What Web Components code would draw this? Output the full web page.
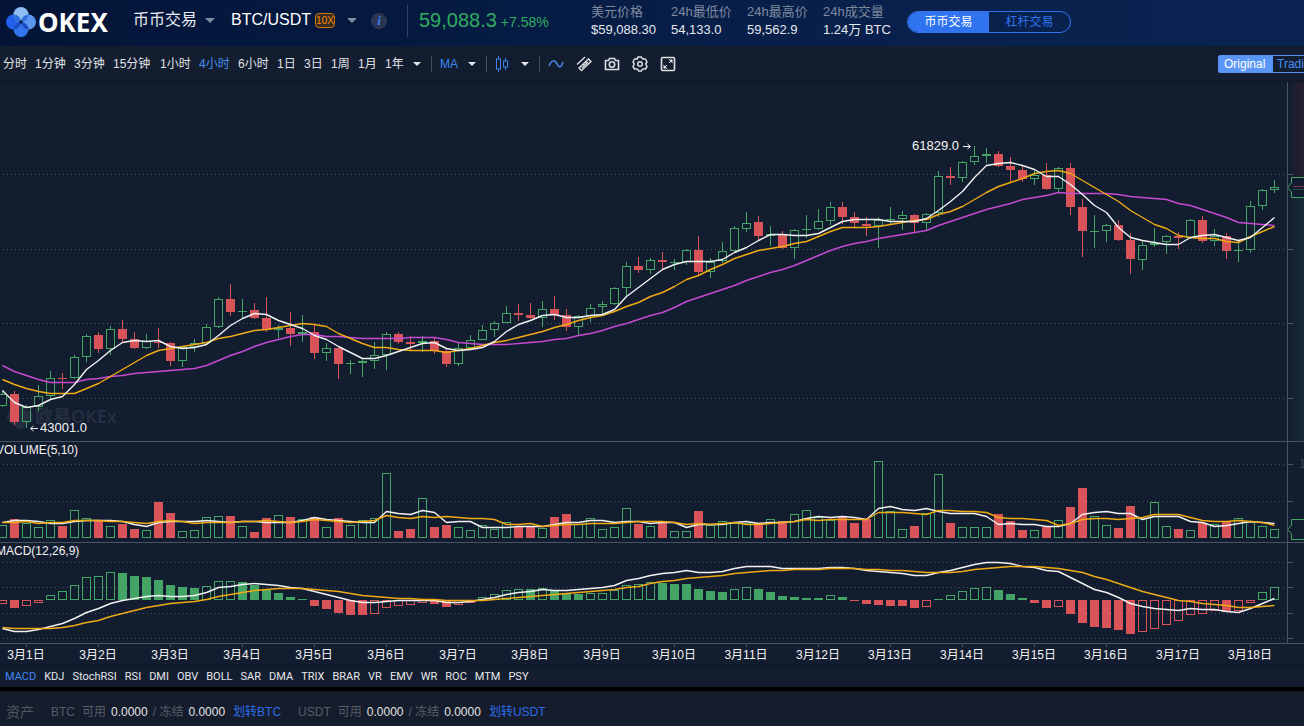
<!DOCTYPE html>
<html lang="zh-CN">
<head>
<meta charset="utf-8">
<title>BTC/USDT - OKEx</title>
<style>
  html, body { margin: 0; min-height: 100%; background: #151d2c; }
  body { font: 12px/16px "Liberation Sans", "Noto Sans CJK SC", sans-serif; color: #d8dbe0; overflow-x: hidden; }
</style>
</head>
<body>
<trade-page></trade-page>
<script>
const define = (name, html, setup) => {
  const tpl = document.createElement('template');
  tpl.innerHTML = html;
  customElements.define(name, class extends HTMLElement {
    constructor() {
      super();
      this.attachShadow({ mode: 'open' }).appendChild(tpl.content.cloneNode(true));
    }
    connectedCallback() { if (setup) setup(this, this.shadowRoot); }
  });
};
const resetButton = 'button{font:inherit;color:inherit;background:none;border:0;padding:0;margin:0;cursor:pointer;white-space:nowrap;text-align:left}';

/* ---------- chart data, one entry for each four-hour bar ---------- */
// direction, then the y of high, body top, body bottom, low
const CANDLES = `g390,394,406,407 r391,394,422,425 g405,407,422,428 g385,396,407,411 g371,378,396,399 r373,378,379,389
g355,357,378,379 g334,336,357,362 r332,335,349,353 g326,329,349,355 r320,329,339,343 r332,339,348,349
g334,341,348,349 r328,342,343,348 r342,343,361,366 g346,347,361,367 g339,343,347,352 g324,327,343,344
g297,299,327,328 r284,299,312,316 g299,311,312,318 r303,310,318,319 r297,318,330,332 g325,328,330,338
r312,328,334,346 g315,332,334,342 r324,332,353,359 g343,348,353,361 r348,348,364,379 g360,363,364,374
g359,361,363,377 g342,355,361,369 g332,334,355,370 r332,334,342,344 r336,342,344,351 g336,341,343,352
r338,341,351,354 r349,351,364,367 g343,348,364,366 g335,340,348,349 g325,330,340,340 g321,323,330,337
g306,313,323,323 r304,313,315,321 r303,315,318,319 g301,309,318,327 r296,309,315,320 r309,315,327,331
g315,316,327,335 g304,308,316,322 g301,304,307,315 g287,288,304,305 g262,266,288,297 r257,266,270,273
g258,260,270,274 r252,260,262,270 g259,262,263,270 g249,250,262,265 r236,250,272,276 g258,262,272,278
g242,251,261,263 g226,228,251,252 g212,223,229,232 r216,222,236,240 g226,234,236,246 r231,235,248,249
g229,230,248,259 g215,229,230,238 g209,221,229,230 g202,207,221,225 r202,207,217,224 r212,217,223,227
r217,224,226,236 g217,220,226,248 g207,219,220,224 g211,215,219,230 r214,215,223,232 g213,214,223,230
g171,176,213,217 r167,176,178,185 g161,162,178,182 g146,156,162,165 g148,154,156,163 r151,154,166,167
r157,166,170,183 r166,170,179,182 g170,175,179,185 r163,175,189,190 g167,168,189,192 r163,168,207,215
r199,207,231,257 g215,231,232,248 g224,225,231,242 r220,225,240,241 r233,240,259,274 g241,245,260,270
g228,243,245,247 g235,236,242,254 r232,236,238,249 g219,220,238,239 r216,220,241,243 g229,236,241,246
r233,236,251,259 g240,250,251,262 g201,206,250,253 g189,190,206,210 g180,187,190,193`.split(/\s+/)
  .map(s => ({ up: s[0] === 'g', v: s.slice(1).split(',').map(Number) }));
const nums = s => s.trim().split(/\s+/).map(Number);
const MA5 = nums(`390 402 407 405 399 396 384 369 360 350 342 340 341 340 346 348 347 344 335 325 318 313 314 320 324 328 335 339 346 352 358 358 355 351 347 343 342 348 350 349 347 341 331 324 320 315 314 317 317 315 314 309 296 287 278 269 264 261 261 261 259 252 247 240 234 234 235 235 233 227 221 219 219 219 221 221 221 218 210 201 191 177 165 163 162 165 169 176 176 184 194 205 212 227 237 240 242 244 244 237 235 234 237 240 237 227 217`);
const MA10 = nums(`379 384 388 391 393 393 393 388 383 376 369 362 355 350 348 346 344 342 338 336 333 330 329 327 325 323 324 326 333 338 343 347 347 349 350 350 350 352 350 348 345 342 340 337 334 331 327 324 320 317 315 311 306 302 296 292 286 279 275 269 264 258 254 250 248 246 243 241 236 231 227 227 227 226 224 222 220 219 214 211 206 199 192 186 182 178 173 171 170 173 180 187 194 201 210 217 224 228 235 237 238 238 241 242 236 231 226`);
const MA30 = nums(`365 371 375 379 382 382 382 379 378 376 375 373 372 371 370 369 368 365 360 355 351 346 342 339 336 334 334 336 336 337 338 338 338 338 337 337 337 339 342 343 344 344 344 343 342 341 339 338 335 333 330 326 323 319 315 312 307 301 297 293 289 285 280 276 272 269 265 260 255 250 246 243 241 238 236 234 232 230 225 221 217 213 209 206 203 199 197 195 192 193 193 193 193 194 196 197 198 199 203 205 209 213 217 222 223 224 225`);
const VOL = nums(`525 519 523 527 520 526 510 518 520 526 524 529 530 502 513 531 530 517 516 516 526 532 518 515 517 519 517 527 518 525 520 518 473 531 529 498 527 525 527 530 525 529 522 527 527 528 517 514 524 518 529 527 508 524 526 522 531 531 511 525 521 523 523 523 519 521 514 510 517 520 517 523 519 461 511 529 526 513 474 523 527 527 527 514 521 530 530 527 520 507 488 516 525 528 506 518 502 526 529 530 523 524 522 518 522 526 529`);
const VMA5 = nums(`522 520 520 521 523 523 521 520 520 520 521 524 526 522 521 521 521 520 521 522 521 521 522 522 522 520 517 519 520 521 522 522 511 513 514 510 512 522 521 521 527 527 527 526 526 526 524 522 522 520 520 522 521 521 523 522 522 527 524 524 524 522 521 523 522 522 521 518 516 517 516 517 519 508 506 509 510 508 511 513 513 513 516 524 523 524 524 526 526 523 514 512 511 513 513 519 516 516 516 521 522 526 525 523 521 522 523`);
const VMA10 = nums(`522 522 521 523 522 522 520 520 520 521 521 522 523 521 520 521 523 522 522 522 521 521 520 521 522 521 519 520 521 522 521 520 515 517 518 516 517 516 517 518 518 519 524 524 523 526 525 524 524 523 523 523 522 521 521 521 522 524 523 524 523 522 524 524 523 522 521 519 520 519 519 519 519 512 512 512 513 514 510 510 511 511 512 517 518 518 519 520 525 523 519 518 518 519 518 517 514 514 514 517 520 521 521 520 521 522 525`);
// signed bar height; "h" marks a bar drawn hollow
const HIST = `-4h -8 -6h -3h 5h 9h 15h 23h 24h 28h 27 24 23 20 15 13 12 14h 19h 19h 18 15 10 7 3 1 -6 -9 -13 -15 -15 -14h -8h -6h -5h -3h -4 -7 -5h -3 3h 6h 10h 11h 11 12h 10 7 6 7h 7h 10h 15h 16h 18h 17 16 16 11 9 8 11h 13h 11 8 4 3 2 2 5h 3 -1 -4 -5 -6 -6 -8 -7h 1 5h 9h 12h 13h 10 6 2 -3 -8 -7h -14 -23 -27 -28 -30 -34 -32h -29h -25h -21h -15h -14h -11h -12 -11h -3h 8h 13h`
  .split(' ').map(s => ({ v: parseInt(s, 10), hollow: s.endsWith('h') }));
const DIF = nums(`628 631 631 629 626 623 618 612 608 603 600 598 596 595 596 596 595 592 587 586 584 583 584 585 587 588 591 594 597 600 602 602 601 600 600 600 600 602 602 601 599 597 594 592 591 589 590 590 589 588 587 585 580 578 575 573 572 570 572 572 571 568 566 566 566 568 568 568 568 567 567 568 570 571 572 573 575 575 572 570 567 564 562 562 563 566 567 570 571 577 583 589 592 597 603 606 608 609 610 608 609 609 611 612 608 603 598`);
const DEA = nums(`627 628 628 628 628 627 625 622 620 616 613 610 607 605 603 602 601 599 596 594 592 590 589 588 588 588 589 590 591 593 595 596 597 598 598 599 599 600 600 600 600 599 598 597 596 595 594 593 592 591 590 589 587 586 583 581 580 578 577 576 575 573 572 571 570 570 569 569 569 568 568 568 569 569 570 570 571 572 572 572 571 569 568 567 566 566 566 567 568 570 572 576 579 583 587 591 594 597 600 601 603 604 605 607 607 606 605`);

const RED = '#d85459', GREEN = '#43a466', STEP = 12, W = 1287;
const bar = (i, top, bottom, color, hollow) => {
  const x = i * STEP - 2, h = Math.max(1, bottom - top);
  return hollow && h > 2
    ? `<rect x="${x + .5}" y="${top + .5}" width="8" height="${h - 1}" fill="none" stroke="${color}"/>`
    : `<rect x="${x}" y="${top}" width="9" height="${h}" fill="${color}"/>`;
};
const line = (ys, color) => `<polyline fill="none" stroke="${color}" stroke-width="1.4" stroke-linejoin="round" points="${ys.map((y, i) => `${i * STEP + 2.5},${y + .5}`).join(' ')}"/>`;
const grid = ys => ys.map(y => `<path d="M3 ${y + .5}H${W - 2}" stroke="#48505f" stroke-dasharray="1 3"/>`).join('');
const WHITE = '#f2f2f2', YELLOW = '#f0ab14', PURPLE = '#c54ad2';
const label = (x, y, s, extra = '') => `<text x="${x}" y="${y}" fill="#f4f4f4" ${extra}>${s}</text>`;

const PANES = {
  price: {
    top: 82, height: 359, grid: [174, 249, 323, 398], tag: 187,
    draw: () => `<g fill="#252e41"><circle cx="14" cy="417" r="7"/><circle cx="26" cy="417" r="7"/><circle cx="20" cy="411" r="6"/><circle cx="20" cy="423" r="6"/>
      <text x="35" y="423" font-family="Noto Sans, Noto Sans CJK SC" font-size="18" font-weight="600">欧易OKEx</text></g>`
      + CANDLES.map((c, i) => {
        const [hi, t, b, lo] = c.v, col = c.up ? GREEN : RED, x = i * STEP + 2;
        return `<path d="M${x + .5} ${hi}V${t}M${x + .5} ${b}V${lo}" stroke="${col}"/>` + bar(i, t, b, col, c.up);
      }).join('') + line(MA30, PURPLE) + line(MA10, YELLOW) + line(MA5, WHITE)
      + label(959, 150, '61829.0', 'font-size="13" text-anchor="end"') + label(40, 432, '43001.0', 'font-size="13"')
      + '<path d="M963 146.500H970M967.500 144L970.500 146.500L967.500 149M38 428.500H31M33.500 426L30.500 428.500L33.500 431" fill="none" stroke="#f0f0f0"/>'
  },
  volume: {
    top: 442, height: 100, grid: [464, 501], tag: 529,
    draw: () => VOL.map((t, i) => bar(i, t, 538, CANDLES[i].up ? GREEN : RED, CANDLES[i].up)).join('')
      + line(VMA5, WHITE) + line(VMA10, YELLOW) + label(-4, 454, 'VOLUME(5,10)')
  },
  macd: {
    top: 543, height: 100, grid: [562, 587, 613, 638],
    draw: () => HIST.map((d, i) => d.v > 0 ? bar(i, 600 - d.v, 600, GREEN, d.hollow) : bar(i, 600, 600 - d.v, RED, d.hollow)).join('')
      + line(DIF, WHITE) + line(DEA, YELLOW) + label(-4, 555, 'MACD(12,26,9)')
  }
};

define('chart-pane', `<style>
  :host{display:flex;border-bottom:1px solid #4b5261;overflow:hidden}
  .plot{flex:1;min-width:0;display:flex;justify-content:flex-end;overflow:hidden}
  .scale{flex:none;border-left:1px solid #4b5261;display:flex}
  :host([kind=price]) .scale{background:linear-gradient(90deg,#131d30,transparent),linear-gradient(#271f30 29%,#172b35 29%)}
  svg{display:block;flex:none}
</style><div class="plot"></div><div class="scale"></div>`, (el, root) => {
  const kind = el.getAttribute('kind'), p = PANES[kind];
  root.querySelector('.plot').innerHTML =
    `<svg width="${W}" height="${p.height}" viewBox="0 ${p.top} ${W} ${p.height}" font-size="12">${grid(p.grid)}${p.draw()}</svg>`;
  const ticks = p.grid.map(y => `<path d="M0 ${y + .5}H5" stroke="#4b5261"/>`).join('');
  const tag = p.tag ? `<path d="M20 ${p.tag - 9.5}H3.500V${p.tag - 4}L-.5 ${p.tag + .5}L3.500 ${p.tag + 5}V${p.tag + 10.5}H20" fill="#131d30" stroke="${GREEN}"/>` : '';
  const mid = kind === 'price' ? '<path d="M5 186.500H16" stroke="#7c3340"/><path d="M5 189.500H16" stroke="#2c4a4b"/>' : '';
  const one = kind === 'volume' ? '<text x="11" y="468" fill="#3c4454">1</text>' : '';
  root.querySelector('.scale').innerHTML =
    `<svg width="16" height="${p.height}" viewBox="0 ${p.top} 16 ${p.height}" font-size="12">${ticks}${tag}${mid}${one}</svg>`;
});

define('time-axis', `<style>
  :host{display:flex;justify-content:flex-end;overflow:hidden;border-bottom:1px solid #0e1624}
  svg{display:block;flex:none}
</style><svg width="1304" height="21" font-size="12"></svg>`, (el, root) => {
  let s = '';
  for (let d = 0; d < 18; d++) {
    const x = 26 + d * 72;
    s += `<path d="M${x}.5 0V3" stroke="#4b5261"/>` + label(x, 15, `3月${d + 1}日`, 'text-anchor="middle"');
  }
  root.querySelector('svg').innerHTML = s;
});

define('down-caret', `<style>
  :host{display:block;flex:none;width:0;height:0;border:5px solid transparent;border-top-color:var(--caret,#7f8ba3);border-bottom:0}
  :host([small]){border-width:4px 4px 0}
</style>`);

define('okex-logo', `<style>
  :host{display:block;flex:none}
  a{display:flex;align-items:center;gap:2px;color:#fff;text-decoration:none;font:700 26px/30px "Noto Sans",sans-serif}
  svg{display:block}
</style><a href="#"><svg width="30" height="30" viewBox="0 0 30 30" aria-hidden="true">
  <circle cx="7.500" cy="15" r="7.500" fill="#2160ec"/><circle cx="15" cy="22.500" r="7.500" fill="#3175ee"/>
  <circle cx="22.500" cy="15" r="7.500" fill="#5b96ee"/><circle cx="15" cy="7.500" r="7.500" fill="#8dbdf2"/>
  <path d="M8 15A7.500 7.500 0 0 1 15 15A7.500 7.500 0 0 0 8 7.500A7.500 7.500 0 0 0 15 15" fill="#3f7fe6"/>
  <path d="M15 15A7.500 7.500 0 0 1 7.500 22.500A7.500 7.500 0 0 1 15 15M15 15A7.500 7.500 0 0 1 22.500 22.500A7.500 7.500 0 0 1 15 15" fill="#1a4dc4"/>
  <path d="M15 15A7.500 7.500 0 0 1 22.500 7.500A7.500 7.500 0 0 1 15 15M15 15A7.500 7.500 0 0 1 7.500 7.500A7.500 7.500 0 0 1 15 15" fill="#2f6ed8"/>
  <path d="M15 13L17 15L15 17L13 15Z" fill="#071a40"/>
</svg>OKEX</a>`);

define('market-stat', `<style>
  :host{display:block;font-size:13px;line-height:18px;white-space:nowrap;color:#e4e8ee}
  .name{color:#7f8a9f}
</style><div class="name"><slot name="name"></slot></div><div><slot></slot></div>`);

define('trade-header', `<style>${resetButton}
  :host{display:flex;align-items:center;height:46px;padding-left:6px;background:linear-gradient(90deg,#031437,#08204b 65%,#0a2350);white-space:nowrap;overflow:hidden;box-sizing:border-box}
  okex-logo{width:127px;margin-bottom:2px}
  .menu{display:flex;align-items:center;font-size:16px;line-height:20px;color:#e6ebf3;margin-bottom:6px}
  .kind{width:98px;gap:8px}
  .pair{width:140px;gap:4px;color:#fff}
  .pair down-caret{margin-left:8px}
  .lever{font-size:10px;line-height:13px;color:#f08a12;border:1px solid #c9780f;border-radius:4px;background:#3a2a1f;width:18px;text-align:center}
  .info{width:16px;height:16px;border-radius:8px;background:#2b3552;color:#3f7df0;font:italic 700 13px/16px "Liberation Serif",serif;text-align:center;margin-bottom:4px}
  .rule{width:1px;height:32px;background:#34425f;margin:0 11px 4px 20px}
  .last{width:172px;display:flex;align-items:baseline;gap:4px;color:#2eac5f;margin-bottom:6px}
  .last b{font-weight:400;font-size:20px;line-height:24px}
  .last span{font-size:14px}
  .stats{display:grid;grid-template-columns:80px 76px 76px 84px;margin-bottom:4px}
  .mode{display:flex;border:1px solid #2f74ee;border-radius:12px;overflow:hidden;height:20px;width:162px;margin-bottom:2px}
  .mode button{flex:1;text-align:center;color:#2f74ee}
  .mode .on{background:#2f74ee;color:#fff}
</style>
<okex-logo></okex-logo>
<button class="menu kind">币币交易<down-caret></down-caret></button>
<button class="menu pair">BTC/USDT<span class="lever">10X</span><down-caret></down-caret></button>
<button class="info" aria-label="info"><span>i</span></button>
<div class="rule"></div>
<div class="last"><b>59,088.3</b><span>+7.58%</span></div>
<div class="stats">
  <market-stat><span slot="name">美元价格</span>$59,088.30</market-stat>
  <market-stat><span slot="name">24h最低价</span>54,133.0</market-stat>
  <market-stat><span slot="name">24h最高价</span>59,562.9</market-stat>
  <market-stat><span slot="name">24h成交量</span>1.24万 BTC</market-stat>
</div>
<div class="mode"><button class="on">币币交易</button><button>杠杆交易</button></div>`);

define('chart-toolbar', `<style>${resetButton}
  :host{display:flex;align-items:center;height:36px;box-sizing:border-box;padding:1px 0 0 3px;border-bottom:1px solid #0e1624;overflow:hidden;white-space:nowrap;color:#e0e2e6;--caret:#e3e5e8}
  .s{width:27px}.m{width:39px}.l{width:47px}.first{width:32px}
  button{flex:none}
  .on{color:#4a8df0}
  .rule{flex:none;width:1px;height:16px;background:#474e5c;margin:0 8px 0 10px}
  .more{margin-left:1px}
  .drop{display:flex;align-items:center;gap:10px;color:#3f84f0}
  .type{gap:12px}
  .tools{display:flex;gap:12px;color:#dcdee2}
  svg{display:block}
  .view{flex:none;display:flex;margin-left:auto;width:86px}
  .view button{height:18px;line-height:16px;padding:0 4px;border:1px solid #5592f4;box-sizing:border-box;color:#4a8df0}
  .view .sel{background:#5a96f6;color:#fff;width:54px;padding:0 5px;border-radius:2px 0 0 2px}
</style>
<button class="first">分时</button><button class="m">1分钟</button><button class="m">3分钟</button><button class="l">15分钟</button><button class="m">1小时</button><button class="m on">4小时</button><button class="m">6小时</button><button class="s">1日</button><button class="s">3日</button><button class="s">1周</button><button class="s">1月</button><button class="s">1年</button>
<button class="more" aria-label="more"><down-caret small></down-caret></button>
<div class="rule"></div>
<button class="drop">MA<down-caret small></down-caret></button>
<div class="rule"></div>
<button class="drop type" aria-label="chart type"><svg width="14" height="16" fill="none" stroke="currentColor"><path d="M3.500 0V3M3.500 13V16M10.500 2V5M10.500 11V14"/><rect x="1.500" y="3" width="4" height="10"/><rect x="8.500" y="5" width="4" height="6"/></svg><down-caret small></down-caret></button>
<div class="rule"></div>
<div class="tools">
  <button class="on" aria-label="line"><svg width="16" height="16" fill="none" stroke="currentColor" stroke-width="1.500"><path d="M1 10C4 3 7 4 9 8S13 12 15 6"/></svg></button>
  <button aria-label="ruler"><svg width="16" height="16" fill="none" stroke="currentColor" stroke-width="1.400"><path d="M1 8.500L9 1M3 12L13 2.500M5.500 14.500L3 12L12.500 3L15 5.500Z"/><path d="M7 8L9 10M9.500 6L11 7.500M6 12L12 6"/></svg></button>
  <button aria-label="camera"><svg width="16" height="16" fill="none" stroke="currentColor" stroke-width="1.600"><path d="M1.500 4.500H4.500L5.500 2.500H10.500L11.500 4.500H14.500V13.500H1.500Z"/><circle cx="8" cy="8.500" r="2.700"/></svg></button>
  <button aria-label="settings"><svg width="16" height="16" fill="none" stroke="currentColor" stroke-width="1.500" stroke-linejoin="round"><path d="M5.500 1.500L6.500 1H9.500L10.500 3L13.500 3L15 6L13.700 8L15 10.500L13.500 13L10.500 13L9.500 15H6.500L5.500 13L2.500 13L1 10.500L2.300 8L1 6L2.500 3L5.500 3Z"/><circle cx="8" cy="8" r="2.300"/></svg></button>
  <button aria-label="full screen"><svg width="16" height="16" fill="none" stroke="currentColor"><rect x="1.500" y="1.500" width="13" height="13" rx="1" stroke-width="1.600"/><path d="M9 7L12 4M7 9L4 12"/><path d="M8.500 3.500H12.500V7.500ZM3.500 8.500V12.500H7.500Z" fill="currentColor" stroke="none"/></svg></button>
</div>
<div class="view"><button class="sel">Original</button><button>TradingView</button></div>`);

define('indicator-tabs', `<style>${resetButton}
  :host{display:flex;gap:8px;align-items:center;height:21px;padding-left:5px;border-bottom:4px solid #000;font:11px/16px Roboto,"Liberation Sans",sans-serif;color:#e4e6e9;overflow:hidden}
  .on{color:#4287ee}
</style>`, (el, root) => {
  'MACD KDJ StochRSI RSI DMI OBV BOLL SAR DMA TRIX BRAR VR EMV WR ROC MTM PSY'.split(' ').forEach((name, i) => {
    const b = document.createElement('button');
    b.textContent = name;
    if (!i) b.className = 'on';
    root.appendChild(b);
  });
});

define('asset-balance', `<style>
  :host{display:flex;gap:5px;white-space:nowrap;color:#565d69}
  .coin{margin-right:2px}
  b{font-weight:400;color:#e2e3e5}
  a{color:#2d6bea;text-decoration:none;margin-left:3px}
</style><span class="coin"></span><span>可用</span><b>0.0000</b><span>/ 冻结</span><b>0.0000</b><a href="#"></a>`, (el, root) => {
  const coin = el.getAttribute('coin');
  root.querySelector('.coin').textContent = coin;
  root.querySelector('a').textContent = '划转' + coin;
});

define('asset-bar', `<style>
  :host{display:flex;align-items:center;gap:17px;height:35px;padding:6px 0 0 6px;box-sizing:border-box;background:#151d2c;overflow:hidden}
  .title{font-size:14px;color:#4f5662}
</style><span class="title">资产</span><asset-balance coin="BTC"></asset-balance><asset-balance coin="USDT"></asset-balance>`);

define('trade-page', `<style>
  :host{display:block;background:#131d30}
  main{display:block}
</style>
<trade-header></trade-header>
<main>
  <chart-toolbar></chart-toolbar>
  <chart-pane kind="price"></chart-pane>
  <chart-pane kind="volume"></chart-pane>
  <chart-pane kind="macd"></chart-pane>
  <time-axis></time-axis>
  <indicator-tabs></indicator-tabs>
</main>
<asset-bar></asset-bar>`);
</script>
</body>
</html>
